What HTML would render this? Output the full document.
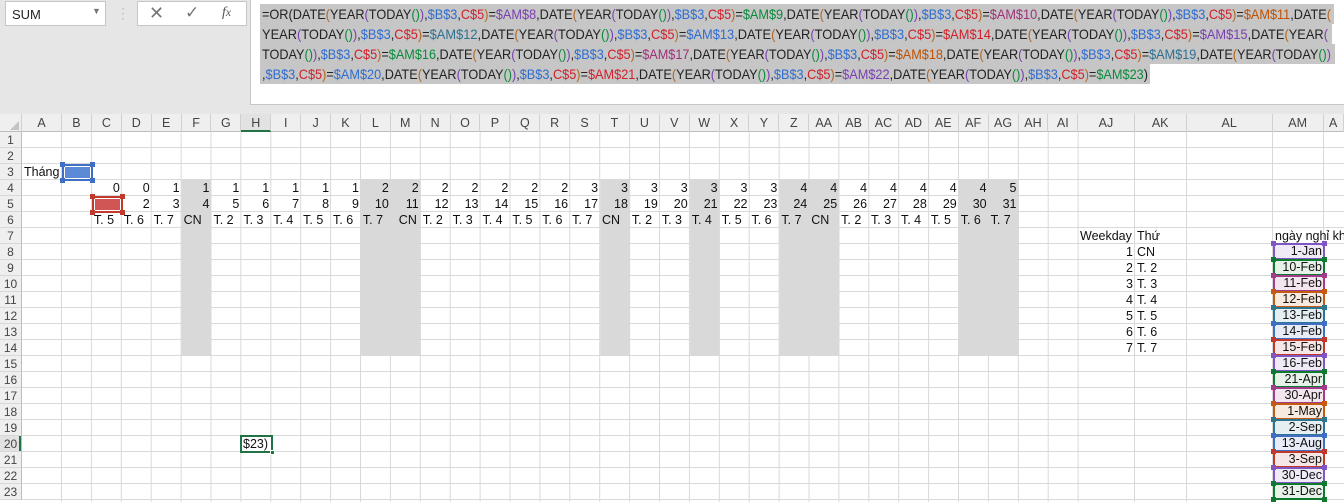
<!DOCTYPE html>
<html><head><meta charset="utf-8"><style>
*{margin:0;padding:0;box-sizing:border-box}
body{width:1344px;height:502px;overflow:hidden;background:#fff;font-family:"Liberation Sans",Arial,sans-serif;position:relative}
.top{position:absolute;left:0;top:0;width:1344px;height:114px;background:#e6e6e6}
.nb{position:absolute;left:5px;top:1px;width:101px;height:25px;background:#fff;border:1px solid #c6c6c6;font-size:13px;color:#222;padding:5px 0 0 6px}
.fb{position:absolute;left:137px;top:1px;width:110px;height:25px;background:#fff;border:1px solid #c6c6c6;color:#666}
.fx{position:absolute;left:250px;top:0;width:1094px;height:105px;background:#fff;border-left:1px solid #c6c6c6;border-bottom:1px solid #c6c6c6}
.hdr{position:absolute;left:0;top:114px;height:18px;width:1344px;background:#efefef;display:flex;font-size:12.5px;color:#444;border-bottom:1px solid #bdbdbd}
.hdr div{flex:none;text-align:center;line-height:18px;border-right:1px solid #d0d0d0;height:18px}
.rh{position:absolute;left:0;top:132px;width:22px;background:#efefef;border-right:1px solid #bdbdbd}
.rh div{height:16px;line-height:16px;font-size:12px;color:#444;text-align:center;border-bottom:1px solid #d8d8d8}
.row{position:absolute;display:flex;font-size:12.5px;color:#111;height:16px;line-height:16px}
.row div{flex:none;width:29.9px;white-space:nowrap}
.r div{text-align:right;padding-right:2px}
.l div{text-align:left;padding-left:2px}
.c{position:absolute;font-size:12.5px;height:16px;line-height:16px;color:#111;white-space:nowrap}
.am{position:absolute;left:1273px;width:52px;height:17px;border:2px solid;font-size:12.5px;line-height:13px;text-align:right;padding-right:1px;color:#111}
.am i{position:absolute;width:5px;height:5px;background:inherit}
.h{position:absolute;width:5px;height:5px}
text{font-family:"Liberation Sans",Arial,sans-serif;font-size:14px;fill:#222}
.k{fill:#b5651d}.v{fill:#7a3fb0}.g{fill:#0a8a3a}.b{fill:#2f6cd0}.r{fill:#d0202a}.m{fill:#a0307a}.o{fill:#c05000}.t{fill:#2e7090}
</style></head><body>
<div class="top"></div>
<div class="nb">SUM<span style="position:absolute;left:86px;top:4px;font-size:9px;color:#777">▼</span></div>
<div style="position:absolute;left:121px;top:6px;color:#aaa;font-size:12px;line-height:5px">·<br>·<br>·</div>
<div class="fb"><span style="position:absolute;left:11px;top:1px;font-size:18px;color:#777">✕</span><span style="position:absolute;left:47px;top:1px;font-size:17px;color:#777">✓</span><span style="position:absolute;left:84px;top:3px;font-size:14px;font-style:italic;font-family:'Liberation Serif',serif;color:#555">f<small>x</small></span></div>
<div class="fx"></div>
<svg style="position:absolute;left:0;top:0" width="1344" height="105">
<rect x="260" y="4" width="1074" height="20" fill="#c6c6c6"/>
<rect x="260" y="24" width="1072" height="20" fill="#c6c6c6"/>
<rect x="260" y="44" width="1075" height="20" fill="#c6c6c6"/>
<rect x="260" y="64" width="890" height="20" fill="#c6c6c6"/>
<text x="262" y="19" textLength="1069" lengthAdjust="spacingAndGlyphs">=OR(DATE<tspan class="k">(</tspan>YEAR<tspan class="v">(</tspan>TODAY<tspan class="g">()</tspan><tspan class="v">)</tspan>,<tspan class="b">$B$3</tspan>,<tspan class="r">C$5</tspan><tspan class="k">)</tspan>=<tspan class="v">$AM$8</tspan>,DATE<tspan class="k">(</tspan>YEAR<tspan class="v">(</tspan>TODAY<tspan class="g">()</tspan><tspan class="v">)</tspan>,<tspan class="b">$B$3</tspan>,<tspan class="r">C$5</tspan><tspan class="k">)</tspan>=<tspan class="g">$AM$9</tspan>,DATE<tspan class="k">(</tspan>YEAR<tspan class="v">(</tspan>TODAY<tspan class="g">()</tspan><tspan class="v">)</tspan>,<tspan class="b">$B$3</tspan>,<tspan class="r">C$5</tspan><tspan class="k">)</tspan>=<tspan class="m">$AM$10</tspan>,DATE<tspan class="k">(</tspan>YEAR<tspan class="v">(</tspan>TODAY<tspan class="g">()</tspan><tspan class="v">)</tspan>,<tspan class="b">$B$3</tspan>,<tspan class="r">C$5</tspan><tspan class="k">)</tspan>=<tspan class="o">$AM$11</tspan>,DATE<tspan class="k">(</tspan></text>
<text x="262" y="39" textLength="1066" lengthAdjust="spacingAndGlyphs">YEAR<tspan class="v">(</tspan>TODAY<tspan class="g">()</tspan><tspan class="v">)</tspan>,<tspan class="b">$B$3</tspan>,<tspan class="r">C$5</tspan><tspan class="k">)</tspan>=<tspan class="t">$AM$12</tspan>,DATE<tspan class="k">(</tspan>YEAR<tspan class="v">(</tspan>TODAY<tspan class="g">()</tspan><tspan class="v">)</tspan>,<tspan class="b">$B$3</tspan>,<tspan class="r">C$5</tspan><tspan class="k">)</tspan>=<tspan class="b">$AM$13</tspan>,DATE<tspan class="k">(</tspan>YEAR<tspan class="v">(</tspan>TODAY<tspan class="g">()</tspan><tspan class="v">)</tspan>,<tspan class="b">$B$3</tspan>,<tspan class="r">C$5</tspan><tspan class="k">)</tspan>=<tspan class="r">$AM$14</tspan>,DATE<tspan class="k">(</tspan>YEAR<tspan class="v">(</tspan>TODAY<tspan class="g">()</tspan><tspan class="v">)</tspan>,<tspan class="b">$B$3</tspan>,<tspan class="r">C$5</tspan><tspan class="k">)</tspan>=<tspan class="v">$AM$15</tspan>,DATE<tspan class="k">(</tspan>YEAR<tspan class="v">(</tspan></text>
<text x="262" y="59" textLength="1069" lengthAdjust="spacingAndGlyphs">TODAY<tspan class="g">()</tspan><tspan class="v">)</tspan>,<tspan class="b">$B$3</tspan>,<tspan class="r">C$5</tspan><tspan class="k">)</tspan>=<tspan class="g">$AM$16</tspan>,DATE<tspan class="k">(</tspan>YEAR<tspan class="v">(</tspan>TODAY<tspan class="g">()</tspan><tspan class="v">)</tspan>,<tspan class="b">$B$3</tspan>,<tspan class="r">C$5</tspan><tspan class="k">)</tspan>=<tspan class="m">$AM$17</tspan>,DATE<tspan class="k">(</tspan>YEAR<tspan class="v">(</tspan>TODAY<tspan class="g">()</tspan><tspan class="v">)</tspan>,<tspan class="b">$B$3</tspan>,<tspan class="r">C$5</tspan><tspan class="k">)</tspan>=<tspan class="o">$AM$18</tspan>,DATE<tspan class="k">(</tspan>YEAR<tspan class="v">(</tspan>TODAY<tspan class="g">()</tspan><tspan class="v">)</tspan>,<tspan class="b">$B$3</tspan>,<tspan class="r">C$5</tspan><tspan class="k">)</tspan>=<tspan class="t">$AM$19</tspan>,DATE<tspan class="k">(</tspan>YEAR<tspan class="v">(</tspan>TODAY<tspan class="g">()</tspan><tspan class="v">)</tspan></text>
<text x="262" y="79" textLength="886" lengthAdjust="spacingAndGlyphs">,<tspan class="b">$B$3</tspan>,<tspan class="r">C$5</tspan><tspan class="k">)</tspan>=<tspan class="b">$AM$20</tspan>,DATE<tspan class="k">(</tspan>YEAR<tspan class="v">(</tspan>TODAY<tspan class="g">()</tspan><tspan class="v">)</tspan>,<tspan class="b">$B$3</tspan>,<tspan class="r">C$5</tspan><tspan class="k">)</tspan>=<tspan class="r">$AM$21</tspan>,DATE<tspan class="k">(</tspan>YEAR<tspan class="v">(</tspan>TODAY<tspan class="g">()</tspan><tspan class="v">)</tspan>,<tspan class="b">$B$3</tspan>,<tspan class="r">C$5</tspan><tspan class="k">)</tspan>=<tspan class="v">$AM$22</tspan>,DATE<tspan class="k">(</tspan>YEAR<tspan class="v">(</tspan>TODAY<tspan class="g">()</tspan><tspan class="v">)</tspan>,<tspan class="b">$B$3</tspan>,<tspan class="r">C$5</tspan><tspan class="k">)</tspan>=<tspan class="g">$AM$23</tspan>)</text>
</svg>

<!-- grid -->
<svg style="position:absolute;left:0;top:132px" width="1344" height="370">
<defs>
<pattern id="hz" width="10" height="16" patternUnits="userSpaceOnUse"><rect y="15" width="10" height="1" fill="#d9d9d9"/></pattern>
<pattern id="vt" x="62" width="29.9" height="10" patternUnits="userSpaceOnUse"><rect x="28.9" width="1" height="10" fill="#d9d9d9"/></pattern>
</defs>
<rect x="22" y="0" width="1322" height="370" fill="url(#hz)"/>
<rect x="62" y="0" width="1017" height="370" fill="url(#vt)"/>
<g fill="#d9d9d9"><rect x="61" width="1" height="370"/><rect x="1134" width="1" height="370"/><rect x="1186" width="1" height="370"/><rect x="1272" width="1" height="370"/><rect x="1323" width="1" height="370"/></g>
<g fill="#d9d9d9">
<rect x="181.6" y="48" width="29.9" height="176"/>
<rect x="361" y="48" width="59.8" height="176"/>
<rect x="600.2" y="48" width="29.9" height="176"/>
<rect x="689.9" y="48" width="29.9" height="176"/>
<rect x="779.6" y="48" width="59.8" height="176"/>
<rect x="959" y="48" width="59.8" height="176"/>
</g>
</svg>

<div class="hdr">
<div style="width:22px;position:relative"><span style="position:absolute;right:2px;bottom:2px;width:0;height:0;border-left:9px solid transparent;border-bottom:9px solid #c4c4c4"></span></div>
<div style="width:40px">A</div><div style="width:29.9px">B</div><div style="width:29.9px">C</div><div style="width:29.9px">D</div><div style="width:29.9px">E</div><div style="width:29.9px">F</div><div style="width:29.9px">G</div><div style="width:29.9px;border-bottom:2px solid #217346;background:#e2e2e2">H</div><div style="width:29.9px">I</div><div style="width:29.9px">J</div><div style="width:29.9px">K</div><div style="width:29.9px">L</div><div style="width:29.9px">M</div><div style="width:29.9px">N</div><div style="width:29.9px">O</div><div style="width:29.9px">P</div><div style="width:29.9px">Q</div><div style="width:29.9px">R</div><div style="width:29.9px">S</div><div style="width:29.9px">T</div><div style="width:29.9px">U</div><div style="width:29.9px">V</div><div style="width:29.9px">W</div><div style="width:29.9px">X</div><div style="width:29.9px">Y</div><div style="width:29.9px">Z</div><div style="width:29.9px">AA</div><div style="width:29.9px">AB</div><div style="width:29.9px">AC</div><div style="width:29.9px">AD</div><div style="width:29.9px">AE</div><div style="width:29.9px">AF</div><div style="width:29.9px">AG</div><div style="width:29.9px">AH</div><div style="width:29.9px">AI</div><div style="width:56.4px">AJ</div><div style="width:52px">AK</div><div style="width:86px">AL</div><div style="width:51px">AM</div><div style="width:20px">A</div>
</div>
<div class="rh">
<div>1</div><div>2</div><div>3</div><div>4</div><div>5</div><div>6</div><div>7</div><div>8</div><div>9</div><div>10</div><div>11</div><div>12</div><div>13</div><div>14</div><div>15</div><div>16</div><div>17</div><div>18</div><div>19</div><div style="background:#e2e2e2;box-shadow:inset -2px 0 #217346">20</div><div>21</div><div>22</div><div>23</div>
</div>

<div class="c" style="left:24px;top:164px">Tháng</div>
<!-- B3 blue ref box -->
<div style="position:absolute;left:62px;top:164px;width:31px;height:17px;background:#5b8ad6;border:2px solid #3f6fc4;box-shadow:inset 0 0 0 1px #fff"></div>
<div class="h" style="left:60px;top:162px;background:#3f6fc4"></div><div class="h" style="left:90px;top:162px;background:#3f6fc4"></div><div class="h" style="left:60px;top:178px;background:#3f6fc4"></div><div class="h" style="left:90px;top:178px;background:#3f6fc4"></div>
<!-- C5 red ref box -->
<div style="position:absolute;left:92px;top:196px;width:31px;height:17px;background:#d05555;border:2px solid #c0392b;box-shadow:inset 0 0 0 1px #fff"></div>
<div class="h" style="left:90px;top:194px;background:#c0392b"></div><div class="h" style="left:120px;top:194px;background:#c0392b"></div><div class="h" style="left:90px;top:210px;background:#c0392b"></div><div class="h" style="left:120px;top:210px;background:#c0392b"></div>

<div class="row r" style="left:91.9px;top:180px"><div>0</div><div>0</div><div>1</div><div>1</div><div>1</div><div>1</div><div>1</div><div>1</div><div>1</div><div>2</div><div>2</div><div>2</div><div>2</div><div>2</div><div>2</div><div>2</div><div>3</div><div>3</div><div>3</div><div>3</div><div>3</div><div>3</div><div>3</div><div>4</div><div>4</div><div>4</div><div>4</div><div>4</div><div>4</div><div>4</div><div>5</div></div>
<div class="row r" style="left:91.9px;top:196px"><div></div><div>2</div><div>3</div><div>4</div><div>5</div><div>6</div><div>7</div><div>8</div><div>9</div><div>10</div><div>11</div><div>12</div><div>13</div><div>14</div><div>15</div><div>16</div><div>17</div><div>18</div><div>19</div><div>20</div><div>21</div><div>22</div><div>23</div><div>24</div><div>25</div><div>26</div><div>27</div><div>28</div><div>29</div><div>30</div><div>31</div></div>
<div class="row l" style="left:91.9px;top:212px"><div>T. 5</div><div>T. 6</div><div>T. 7</div><div>CN</div><div>T. 2</div><div>T. 3</div><div>T. 4</div><div>T. 5</div><div>T. 6</div><div>T. 7</div><div style="padding-left:8px">CN</div><div>T. 2</div><div>T. 3</div><div>T. 4</div><div>T. 5</div><div>T. 6</div><div>T. 7</div><div>CN</div><div>T. 2</div><div>T. 3</div><div>T. 4</div><div>T. 5</div><div>T. 6</div><div>T. 7</div><div>CN</div><div>T. 2</div><div>T. 3</div><div>T. 4</div><div>T. 5</div><div>T. 6</div><div>T. 7</div></div>

<!-- right table -->
<div class="c" style="left:1080px;top:228px">Weekday</div>
<div class="c" style="left:1137px;top:228px">Thứ</div>
<div class="c" style="left:1275px;top:228px">ngày nghỉ kh</div>
<div class="c" style="left:1078px;top:244px;width:55px;text-align:right">1</div><div class="c" style="left:1137px;top:244px">CN</div>
<div class="c" style="left:1078px;top:260px;width:55px;text-align:right">2</div><div class="c" style="left:1137px;top:260px">T. 2</div>
<div class="c" style="left:1078px;top:276px;width:55px;text-align:right">3</div><div class="c" style="left:1137px;top:276px">T. 3</div>
<div class="c" style="left:1078px;top:292px;width:55px;text-align:right">4</div><div class="c" style="left:1137px;top:292px">T. 4</div>
<div class="c" style="left:1078px;top:308px;width:55px;text-align:right">5</div><div class="c" style="left:1137px;top:308px">T. 5</div>
<div class="c" style="left:1078px;top:324px;width:55px;text-align:right">6</div><div class="c" style="left:1137px;top:324px">T. 6</div>
<div class="c" style="left:1078px;top:340px;width:55px;text-align:right">7</div><div class="c" style="left:1137px;top:340px">T. 7</div>

<div class="am" style="top:243px;border-color:#7e57c2;background:#efeaf6">1-Jan</div>
<div class="am" style="top:259px;border-color:#0e7a2e;background:#e6f1e8">10-Feb</div>
<div class="am" style="top:275px;border-color:#a33c8a;background:#f4e6ef">11-Feb</div>
<div class="am" style="top:291px;border-color:#c55a11;background:#f8eadf">12-Feb</div>
<div class="am" style="top:307px;border-color:#2e7592;background:#e5eef2">13-Feb</div>
<div class="am" style="top:323px;border-color:#3f6fc4;background:#e7ecf7">14-Feb</div>
<div class="am" style="top:339px;border-color:#c0392b;background:#f7e6e6">15-Feb</div>
<div class="am" style="top:355px;border-color:#7e57c2;background:#efeaf6">16-Feb</div>
<div class="am" style="top:371px;border-color:#0e7a2e;background:#e6f1e8">21-Apr</div>
<div class="am" style="top:387px;border-color:#a33c8a;background:#f4e6ef">30-Apr</div>
<div class="am" style="top:403px;border-color:#c55a11;background:#f8eadf">1-May</div>
<div class="am" style="top:419px;border-color:#2e7592;background:#e5eef2">2-Sep</div>
<div class="am" style="top:435px;border-color:#3f6fc4;background:#e7ecf7">13-Aug</div>
<div class="am" style="top:451px;border-color:#c0392b;background:#f7e6e6">3-Sep</div>
<div class="am" style="top:467px;border-color:#7e57c2;background:#efeaf6">30-Dec</div>
<div class="am" style="top:483px;border-color:#0e7a2e;background:#e6f1e8">31-Dec</div>
<!-- handles -->
<svg style="position:absolute;left:1270px;top:240px" width="60" height="262">
<g fill="#7e57c2"><rect x="1" y="1" width="5" height="5"/><rect x="52" y="1" width="5" height="5"/><rect x="1" y="113" width="5" height="5"/><rect x="52" y="113" width="5" height="5"/><rect x="1" y="225" width="5" height="5"/><rect x="52" y="225" width="5" height="5"/></g>
<g fill="#0e7a2e"><rect x="1" y="17" width="5" height="5"/><rect x="52" y="17" width="5" height="5"/><rect x="1" y="129" width="5" height="5"/><rect x="52" y="129" width="5" height="5"/><rect x="1" y="241" width="5" height="5"/><rect x="52" y="241" width="5" height="5"/><rect x="1" y="257" width="5" height="5"/><rect x="52" y="257" width="5" height="5"/></g>
<g fill="#a33c8a"><rect x="1" y="33" width="5" height="5"/><rect x="52" y="33" width="5" height="5"/><rect x="1" y="145" width="5" height="5"/><rect x="52" y="145" width="5" height="5"/></g>
<g fill="#c55a11"><rect x="1" y="49" width="5" height="5"/><rect x="52" y="49" width="5" height="5"/><rect x="1" y="161" width="5" height="5"/><rect x="52" y="161" width="5" height="5"/></g>
<g fill="#2e7592"><rect x="1" y="65" width="5" height="5"/><rect x="52" y="65" width="5" height="5"/><rect x="1" y="177" width="5" height="5"/><rect x="52" y="177" width="5" height="5"/></g>
<g fill="#3f6fc4"><rect x="1" y="81" width="5" height="5"/><rect x="52" y="81" width="5" height="5"/><rect x="1" y="193" width="5" height="5"/><rect x="52" y="193" width="5" height="5"/></g>
<g fill="#c0392b"><rect x="1" y="97" width="5" height="5"/><rect x="52" y="97" width="5" height="5"/><rect x="1" y="209" width="5" height="5"/><rect x="52" y="209" width="5" height="5"/></g>
</svg>

<!-- active cell H20 -->
<div style="position:absolute;left:240px;top:435px;width:33px;height:18px;border:2px solid #217346;background:#fff;font-size:12.5px;line-height:14px;overflow:hidden;padding-left:1px;color:#111">$23)</div>
<div style="position:absolute;left:270px;top:450px;width:5px;height:5px;background:#217346;border:1px solid #fff"></div>
</body></html>
